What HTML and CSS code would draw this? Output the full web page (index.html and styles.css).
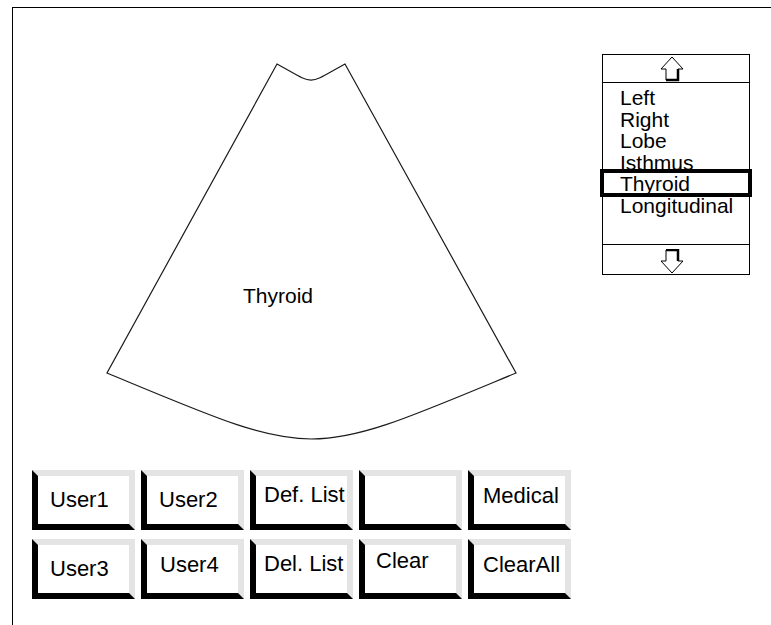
FILE: index.html
```html
<!DOCTYPE html>
<html lang="en">
<head>
    <meta charset="UTF-8">
    <meta name="viewport" content="width=device-width, initial-scale=1.0">
    <title>Annotation - Thyroid</title>
    <link rel="stylesheet" href="styles.css">
</head>
<body>
    <div class="frame">
        <div class="top">
            <svg class="sector" width="560" height="440" viewBox="13 8 560 440">
                <path d="M277 64 C316 85.5 306 85.5 345 64 L516 373 C304 461 319 461 107 373 Z"
                      fill="none" stroke="#1a1a1a" stroke-width="1.2" stroke-linejoin="miter"/>
                <text x="278" y="303" text-anchor="middle" class="sector-label">Thyroid</text>
            </svg>

            <div class="picker">
                <div class="scroll scroll-up">
                    <svg width="24" height="26" viewBox="0 0 24 26">
                        <polygon points="12,1 23,13 18,13 18,24 6,24 6,13 1,13" fill="#fff" stroke="#000" stroke-width="1"/>
                        <polyline points="18,13 18,24 6,24" fill="none" stroke="#000" stroke-width="2.5"/>
                    </svg>
                </div>
                <ul class="words">
                    <li>Left</li>
                    <li>Right</li>
                    <li>Lobe</li>
                    <li>Isthmus</li>
                    <li>Thyroid</li>
                    <li>Longitudinal</li>
                </ul>
                <div class="selected"></div>
                <div class="scroll scroll-down">
                    <svg width="24" height="25" viewBox="0 0 24 25">
                        <polygon points="6,1 18,1 18,12 23,12 12,24 1,12 6,12" fill="#fff" stroke="#000" stroke-width="1"/>
                        <polyline points="6,1 18,1 18,12" fill="none" stroke="#000" stroke-width="2.5"/>
                    </svg>
                </div>
            </div>
        </div>

        <div class="keys">
            <button class="key">User1</button>
            <button class="key">User2</button>
            <button class="key key-list">Def. List</button>
            <button class="key"></button>
            <button class="key key-wide">Medical</button>
            <button class="key">User3</button>
            <button class="key key-alt">User4</button>
            <button class="key key-list">Del. List</button>
            <button class="key key-top">Clear</button>
            <button class="key key-wide">ClearAll</button>
        </div>
    </div>
</body>
</html>
```

FILE: styles.css
```css
* {
    margin: 0;
    padding: 0;
    box-sizing: border-box;
}
body {
    font-family: 'Liberation Sans', Arial, sans-serif;
    background: #fff;
    color: #000;
    height: 100vh;
    overflow: hidden;
}
.frame {
    margin: 7px 0 0 12px;
    height: calc(100vh - 7px);
    border-top: 1px solid #000;
    border-left: 1px solid #000;
}
.top {
    display: flex;
    align-items: flex-start;
    height: 440px;
}
.sector {
    display: block;
    flex: none;
}
.sector-label {
    font-family: 'Liberation Sans', Arial, sans-serif;
    font-size: 21px;
    fill: #000;
}

/* lista de palabras a la derecha */
.picker {
    position: relative;
    margin: 46px 0 0 29px;
    width: 148px;
    border: 1px solid #000;
    display: flex;
    flex-direction: column;
}
.scroll {
    display: flex;
    justify-content: center;
    padding-right: 9px;
}
.scroll svg {
    display: block;
}
.scroll-up {
    height: 28px;
    align-items: center;
    border-bottom: 1px solid #000;
}
.scroll-down {
    height: 30px;
    align-items: flex-end;
    border-top: 1px solid #000;
}
.words {
    list-style: none;
    height: 161px;
    padding: 4px 0 0 17px;
    font-size: 21px;
    line-height: 21.6px;
}
.selected {
    position: absolute;
    left: -3px;
    top: 114px;
    width: 152px;
    height: 28px;
    border: 4px solid #000;
}

/* botones */
.keys {
    display: grid;
    grid-template-columns: repeat(5, 103px);
    grid-auto-rows: 60px;
    column-gap: 6px;
    row-gap: 9px;
    margin-top: 22px;
    padding-left: 19px;
}
.key {
    display: flex;
    align-items: flex-start;
    justify-content: flex-start;
    background: #fff;
    border-style: solid;
    border-width: 6px;
    border-color: #e4e4e4 #e4e4e4 #000 #000;
    padding: 13px 0 0 12px;
    font-family: 'Liberation Sans', Arial, sans-serif;
    font-size: 22px;
    line-height: 22px;
    color: #000;
    white-space: nowrap;
    cursor: pointer;
}
.key-alt {
    padding: 9px 0 0 13px;
}
.key-list {
    padding: 8px 0 0 8px;
}
.key-wide {
    padding: 9px 0 0 9px;
}
.key-top {
    padding: 5px 0 0 11px;
}
```
